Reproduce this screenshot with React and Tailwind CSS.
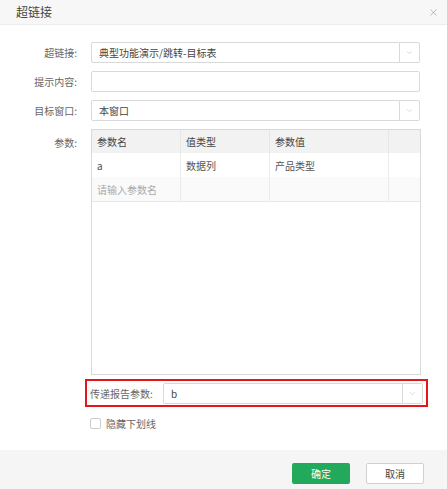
import { ChevronDown, X } from "lucide-react";

const font = { fontFamily: '"Noto Sans CJK SC", "Liberation Sans", sans-serif' };

function Select({ value, width }) {
  return (
    <div className={`flex h-[21px] ${width}`}>
      <div className="flex-1 flex items-center border border-[#d9d9d9] rounded-l-[2px] px-[7px] text-[10px] text-[#444] bg-white">
        {value}
      </div>
      <div className="w-[20px] flex items-center justify-center border border-l-0 border-[#d9d9d9] rounded-r-[2px] bg-white">
        <ChevronDown size={9} strokeWidth={1.3} className="text-[#b5b5b5]" />
      </div>
    </div>
  );
}

function Row({ label, children }) {
  return (
    <div className="flex items-center h-[21px]">
      <div className="w-[77px] text-right text-[10px] text-[#666]">{label}</div>
      <div className="ml-[14px]">{children}</div>
    </div>
  );
}

export default function App() {
  const cols = "grid grid-cols-[89px_89px_119px_1fr]";
  return (
    <div style={font} className="w-[447px] h-[489px] bg-white flex flex-col">
      <div className="h-[25px] bg-[#f7f7f7] border-b border-[#ececec] flex items-center justify-between pl-[16px] pr-[8px]">
        <span className="text-[12px] text-[#444]">超链接</span>
        <X size={11} strokeWidth={1.2} className="text-[#888]" />
      </div>

      <div className="flex-1 pt-[17px] flex flex-col">
        <div className="flex flex-col gap-[8px]">
          <Row label="超链接:">
            <Select value="典型功能演示/跳转-目标表" width="w-[329px]" />
          </Row>
          <Row label="提示内容:">
            <div className="w-[329px] h-[21px] border border-[#d9d9d9] rounded-[2px]" />
          </Row>
          <Row label="目标窗口:">
            <Select value="本窗口" width="w-[329px]" />
          </Row>
          <div className="flex">
            <div className="w-[77px] text-right text-[10px] text-[#666] pt-[6px]">参数:</div>
            <div className="ml-[14px] w-[330px] h-[246px] border border-[#d9d9d9] text-[10px]">
              <div className={`${cols} h-[23px] bg-[#f2f2f2] text-[#444]`}>
                <div className="flex items-center pl-[5px] border-r border-[#e6e6e6]">参数名</div>
                <div className="flex items-center pl-[5px] border-r border-[#e6e6e6]">值类型</div>
                <div className="flex items-center pl-[5px] border-r border-[#e6e6e6]">参数值</div>
                <div />
              </div>
              <div className={`${cols} h-[24px] bg-white text-[#555]`}>
                <div className="flex items-center pl-[5px] border-r border-[#ececec]">a</div>
                <div className="flex items-center pl-[5px] border-r border-[#ececec]">数据列</div>
                <div className="flex items-center pl-[5px] border-r border-[#ececec]">产品类型</div>
                <div />
              </div>
              <div className={`${cols} h-[25px] bg-[#fafafa] text-[#aaa] border-b border-[#e8e8e8]`}>
                <div className="flex items-center pl-[5px] border-r border-[#ececec]">请输入参数名</div>
                <div className="border-r border-[#ececec]" />
                <div className="border-r border-[#ececec]" />
                <div />
              </div>
            </div>
          </div>
        </div>

        <div className="ml-[85px] mt-[4px] w-[343px] h-[28px] border-2 border-[#e8141b] flex items-center pl-[3px] pr-[3px]">
          <span className="w-[73px] text-[10px] text-[#666]">传递报告参数:</span>
          <Select value="b" width="flex-1" />
        </div>

        <label className="ml-[90px] mt-[9px] flex items-center gap-[5px]">
          <span className="w-[11px] h-[11px] border border-[#ccc] rounded-[2px] bg-white" />
          <span className="text-[10px] text-[#666]">隐藏下划线</span>
        </label>
      </div>

      <div className="h-[39px] bg-[#f5f5f5] flex justify-end items-start pt-[13px] pr-[23px] gap-[16px]">
        <button className="w-[58px] h-[21px] rounded-[2px] bg-[#22a95c] text-white text-[10px]">确定</button>
        <button className="w-[58px] h-[21px] rounded-[2px] bg-white border border-[#d0d0d0] text-[#444] text-[10px]">取消</button>
      </div>
    </div>
  );
}
